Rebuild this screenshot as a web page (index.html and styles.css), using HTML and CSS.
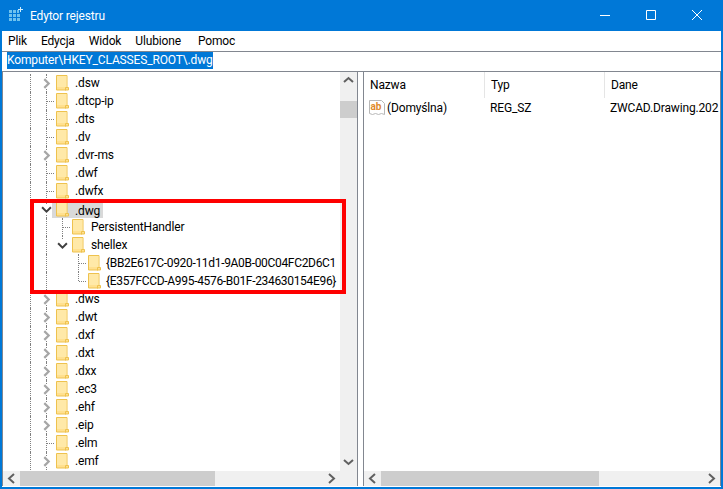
FILE: index.html
```html
<!DOCTYPE html>
<html lang="pl">
<head>
  <meta charset="UTF-8">
  <title>Edytor rejestru</title>
  <link rel="stylesheet" href="styles.css">
</head>
<body>

<svg class="defs" width="0" height="0">
  <symbol id="folder" viewBox="0 0 13 16">
    <path d="M.5.5h10.500v12h1.500v2.500h-12z" fill="#ffe08f" stroke="#eec24e"/>
    <path d="M1 1h9.500v11h-9.500z" fill="#ffe9a8"/>
    <path d="M9.500 15.500v-3h2" fill="none" stroke="#eec24e"/>
  </symbol>
  <symbol id="closed" viewBox="0 0 10 10">
    <path d="M3 1l4 4-4 4" fill="none" stroke="#a6a6a6" stroke-width="2"/>
  </symbol>
  <symbol id="open" viewBox="0 0 10 10">
    <path d="M1 3l4 4 4-4" fill="none" stroke="#404040" stroke-width="1.800"/>
  </symbol>
</svg>

<div class="window">
  <div class="titlebar">
    <svg class="app-icon" width="16" height="16" viewBox="0 0 16 16">
      <path d="M1 3h3v3h-3zM5 3h3v3h-3zM9 3h2v3h-2zM1 7h3v3h-3zM5 7h3v3h-3zM9 7h3v3h-3zM1 11h3v3h-3zM5 11h3v3h-3zM9 11h3v3h-3z" fill="#6fc3ee"/>
      <path d="M13 0v2h2v1h-2v2h-1v-2h-2v-1h2v-2z" fill="#cfeefc"/>
    </svg>
    <span class="title">Edytor rejestru</span>
    <div class="controls">
      <svg width="46" height="31" viewBox="0 0 46 31"><path d="M18 15.500h10" stroke="#fff"/></svg>
      <svg width="46" height="31" viewBox="0 0 46 31"><path d="M18.500 10.500h9v9h-9z" fill="none" stroke="#fff"/></svg>
      <svg width="46" height="31" viewBox="0 0 46 31"><path d="M18 10l10 10M28 10l-10 10" stroke="#fff"/></svg>
    </div>
  </div>

  <div class="menu">
    <span>Plik</span><span>Edycja</span><span>Widok</span><span>Ulubione</span><span>Pomoc</span>
  </div>

  <div class="address"><span class="selected">Komputer\HKEY_CLASSES_ROOT\.dwg</span></div>

  <div class="panes">
    <div class="tree-pane">
      <div class="tree-body">
        <div class="tree">
          <div class="row"><i class="g v"></i><i class="g v"><svg class="exp"><use href="#closed"/></svg></i><svg class="folder"><use href="#folder"/></svg><span class="name">.dsw</span></div>
          <div class="row"><i class="g v"></i><i class="g t"></i><svg class="folder"><use href="#folder"/></svg><span class="name">.dtcp-ip</span></div>
          <div class="row"><i class="g v"></i><i class="g t"></i><svg class="folder"><use href="#folder"/></svg><span class="name">.dts</span></div>
          <div class="row"><i class="g v"></i><i class="g t"></i><svg class="folder"><use href="#folder"/></svg><span class="name">.dv</span></div>
          <div class="row"><i class="g v"></i><i class="g v"><svg class="exp"><use href="#closed"/></svg></i><svg class="folder"><use href="#folder"/></svg><span class="name">.dvr-ms</span></div>
          <div class="row"><i class="g v"></i><i class="g t"></i><svg class="folder"><use href="#folder"/></svg><span class="name">.dwf</span></div>
          <div class="row"><i class="g v"></i><i class="g t"></i><svg class="folder"><use href="#folder"/></svg><span class="name">.dwfx</span></div>
          <div class="row"><i class="g v"></i><i class="g v"><svg class="exp"><use href="#open"/></svg></i><div class="current"><svg class="folder"><use href="#folder"/></svg><span class="name">.dwg</span></div></div>
          <div class="row"><i class="g v"></i><i class="g v"></i><i class="g t"></i><svg class="folder"><use href="#folder"/></svg><span class="name">PersistentHandler</span></div>
          <div class="row"><i class="g v"></i><i class="g v"></i><i class="g u"><svg class="exp"><use href="#open"/></svg></i><svg class="folder"><use href="#folder"/></svg><span class="name">shellex</span></div>
          <div class="row"><i class="g v"></i><i class="g v"></i><i class="g"></i><i class="g t"></i><svg class="folder"><use href="#folder"/></svg><span class="name guid">{BB2E617C-0920-11d1-9A0B-00C04FC2D6C1</span></div>
          <div class="row"><i class="g v"></i><i class="g v"></i><i class="g"></i><i class="g l"></i><svg class="folder"><use href="#folder"/></svg><span class="name guid">{E357FCCD-A995-4576-B01F-234630154E96}</span></div>
          <div class="row"><i class="g v"></i><i class="g v"><svg class="exp"><use href="#closed"/></svg></i><svg class="folder"><use href="#folder"/></svg><span class="name">.dws</span></div>
          <div class="row"><i class="g v"></i><i class="g v"><svg class="exp"><use href="#closed"/></svg></i><svg class="folder"><use href="#folder"/></svg><span class="name">.dwt</span></div>
          <div class="row"><i class="g v"></i><i class="g v"><svg class="exp"><use href="#closed"/></svg></i><svg class="folder"><use href="#folder"/></svg><span class="name">.dxf</span></div>
          <div class="row"><i class="g v"></i><i class="g v"><svg class="exp"><use href="#closed"/></svg></i><svg class="folder"><use href="#folder"/></svg><span class="name">.dxt</span></div>
          <div class="row"><i class="g v"></i><i class="g v"><svg class="exp"><use href="#closed"/></svg></i><svg class="folder"><use href="#folder"/></svg><span class="name">.dxx</span></div>
          <div class="row"><i class="g v"></i><i class="g v"><svg class="exp"><use href="#closed"/></svg></i><svg class="folder"><use href="#folder"/></svg><span class="name">.ec3</span></div>
          <div class="row"><i class="g v"></i><i class="g v"><svg class="exp"><use href="#closed"/></svg></i><svg class="folder"><use href="#folder"/></svg><span class="name">.ehf</span></div>
          <div class="row"><i class="g v"></i><i class="g v"><svg class="exp"><use href="#closed"/></svg></i><svg class="folder"><use href="#folder"/></svg><span class="name">.eip</span></div>
          <div class="row"><i class="g v"></i><i class="g t"></i><svg class="folder"><use href="#folder"/></svg><span class="name">.elm</span></div>
          <div class="row"><i class="g v"></i><i class="g v"><svg class="exp"><use href="#closed"/></svg></i><svg class="folder"><use href="#folder"/></svg><span class="name">.emf</span></div>
        </div>
        <div class="vscroll">
          <svg class="arrow" width="17" height="17" viewBox="0 0 17 17"><path d="M4 10l4.500-4 4.500 4" fill="none" stroke="#606060" stroke-width="2"/></svg>
          <div class="vthumb"></div>
          <svg class="arrow down" width="17" height="17" viewBox="0 0 17 17"><path d="M4 6l4.500 4 4.500-4" fill="none" stroke="#606060" stroke-width="2"/></svg>
        </div>
      </div>
      <div class="hscroll">
        <svg class="arrow" width="17" height="15" viewBox="0 0 17 15"><path d="M11 3l-5 4.500 5 4.500" fill="none" stroke="#606060" stroke-width="2"/></svg>
        <div class="hthumb tree-thumb"></div>
        <svg class="arrow end" width="17" height="15" viewBox="0 0 17 15"><path d="M6 3l5 4.500-5 4.500" fill="none" stroke="#606060" stroke-width="2"/></svg>
        <div class="corner"></div>
      </div>
    </div>

    <div class="list-pane">
      <div class="list-head">
        <div class="col col-name">Nazwa</div>
        <div class="col col-type">Typ</div>
        <div class="col col-data">Dane</div>
      </div>
      <div class="list-row">
        <div class="col col-name value-name">
          <svg width="16" height="16" viewBox="0 0 16 16">
            <path d="M.5.500h12l3 3v11l-3-1-3 1-3-1-3 1-3-1z" fill="#fff" stroke="#b8b8b8"/>
            <text x="1.500" y="10" class="ab">ab</text>
          </svg>
          <span>(Domyślna)</span>
        </div>
        <div class="col col-type">REG_SZ</div>
        <div class="col col-data">ZWCAD.Drawing.202</div>
      </div>
      <div class="list-fill"></div>
      <div class="hscroll">
        <svg class="arrow" width="17" height="15" viewBox="0 0 17 15"><path d="M11 3l-5 4.500 5 4.500" fill="none" stroke="#606060" stroke-width="2"/></svg>
        <div class="hthumb list-thumb"></div>
        <svg class="arrow end" width="17" height="15" viewBox="0 0 17 15"><path d="M6 3l5 4.500-5 4.500" fill="none" stroke="#606060" stroke-width="2"/></svg>
      </div>
    </div>
  </div>

  <div class="mark"></div>
</div>

</body>
</html>
```

FILE: styles.css
```css
* {
  box-sizing: border-box;
}

html, body {
  margin: 0;
  padding: 0;
  height: 100%;
  overflow: hidden;
}

body {
  font-family: Roboto, sans-serif;
  font-size: 12px;
  letter-spacing: -0.15px;
  color: #000;
}

.defs {
  position: absolute;
}

.window {
  position: relative;
  height: 489px;
  display: flex;
  flex-direction: column;
  background: #fff;
  border: 2px solid #0078d7;
  border-top: none;
}

.titlebar {
  height: 31px;
  margin: 0 -2px;
  padding-left: 8px;
  display: flex;
  align-items: center;
  flex: none;
  background: #0078d7;
  color: #fff;
}

.app-icon {
  margin-top: -1px;
}

.title {
  margin-left: 6px;
  font-size: 12px;
}

.controls {
  margin-left: auto;
  margin-right: 3px;
  display: flex;
}

.controls svg {
  display: block;
}

.menu {
  height: 20px;
  flex: none;
  display: flex;
  gap: 14px;
  padding-left: 6px;
  align-items: center;
}

.menu span:last-child {
  margin-left: 3px;
}

.address {
  height: 21px;
  flex: none;
  padding-left: 5px;
  border-top: 1px solid #828790;
  border-bottom: 1px solid #828790;
  line-height: 17px;
}

.selected {
  display: inline-block;
  background: #0078d7;
  color: #fff;
  height: 17px;
}

.panes {
  flex: 1;
  min-height: 0;
  display: flex;
  border-bottom: 1px solid #fff;
}

.tree-pane {
  width: 356px;
  flex: none;
  display: flex;
  flex-direction: column;
  border-left: 1px solid #828790;
  border-right: 1px solid #828790;
}

.tree-body {
  flex: 1;
  min-height: 0;
  display: flex;
}

.tree {
  flex: 1;
  min-width: 0;
  overflow: hidden;
  padding: 2px 0 0 19px;
}

.row {
  height: 18px;
  display: flex;
  align-items: center;
  white-space: nowrap;
}

.g {
  position: relative;
  display: block;
  width: 16px;
  height: 18px;
  flex: none;
}

.g.v::before,
.g.t::before,
.g.u::before,
.g.l::before {
  content: "";
  position: absolute;
  left: 8px;
  top: 0;
  bottom: 0;
  border-left: 1px dotted #808080;
}

.g.u::before,
.g.l::before {
  bottom: 9px;
}

.g.t::after,
.g.l::after {
  content: "";
  position: absolute;
  left: 9px;
  top: 9px;
  width: 7px;
  border-top: 1px dotted #808080;
}

.exp {
  position: absolute;
  left: 3px;
  top: 4px;
  width: 11px;
  height: 11px;
  background: #fff;
}

.folder {
  width: 13px;
  height: 16px;
  margin-left: 2px;
  flex: none;
}

.name {
  margin-left: 6px;
}

.guid {
  margin-left: 5px;
  letter-spacing: -0.32px;
}

.current {
  height: 15px;
  margin-top: 3px;
  padding-right: 3px;
  padding-left: 4px;
  margin-left: -2px;
  display: flex;
  align-items: center;
  background: #d9d9d9;
}

.current .folder {
  margin-left: 0;
  margin-top: -3px;
}

.vscroll {
  width: 17px;
  flex: none;
  display: flex;
  flex-direction: column;
  background: #f0f0f0;
}

.vthumb {
  height: 17px;
  margin-top: 12px;
  background: #cdcdcd;
}

.arrow {
  display: block;
  flex: none;
}

.arrow.down {
  margin-top: auto;
}

.arrow.end {
  margin-left: auto;
}

.hscroll {
  height: 15px;
  flex: none;
  display: flex;
  background: #f0f0f0;
}

.hthumb {
  background: #cdcdcd;
}

.tree-thumb {
  width: 195px;
}

.list-thumb {
  width: 218px;
}

.corner {
  width: 17px;
  flex: none;
}

.list-pane {
  flex: 1;
  min-width: 0;
  margin-left: 5px;
  display: flex;
  flex-direction: column;
  border-left: 1px solid #828790;
  border-right: 1px solid #828790;
  overflow: hidden;
}

.list-head,
.list-row {
  display: flex;
  flex: none;
  white-space: nowrap;
}

.list-head {
  height: 26px;
  line-height: 26px;
}

.list-head .col + .col {
  border-left: 1px solid #e5e5e5;
}

.list-row {
  height: 18px;
  margin-top: 1px;
  line-height: 18px;
}

.col {
  flex: none;
  padding-left: 6px;
}

.col-name {
  width: 120px;
}

.col-type {
  width: 120px;
}

.col-data {
  flex: 1;
  min-width: 0;
  overflow: hidden;
}

.value-name {
  display: flex;
  align-items: center;
  gap: 2px;
  padding-left: 5px;
}

.ab {
  font-family: Roboto, sans-serif;
  font-size: 10px;
  font-weight: 700;
  letter-spacing: 0;
  fill: #e08a2c;
}

.list-fill {
  flex: 1;
}

.mark {
  position: absolute;
  left: 28px;
  top: 199px;
  width: 316px;
  height: 95px;
  border: 4px solid #fe0000;
  pointer-events: none;
}
```
